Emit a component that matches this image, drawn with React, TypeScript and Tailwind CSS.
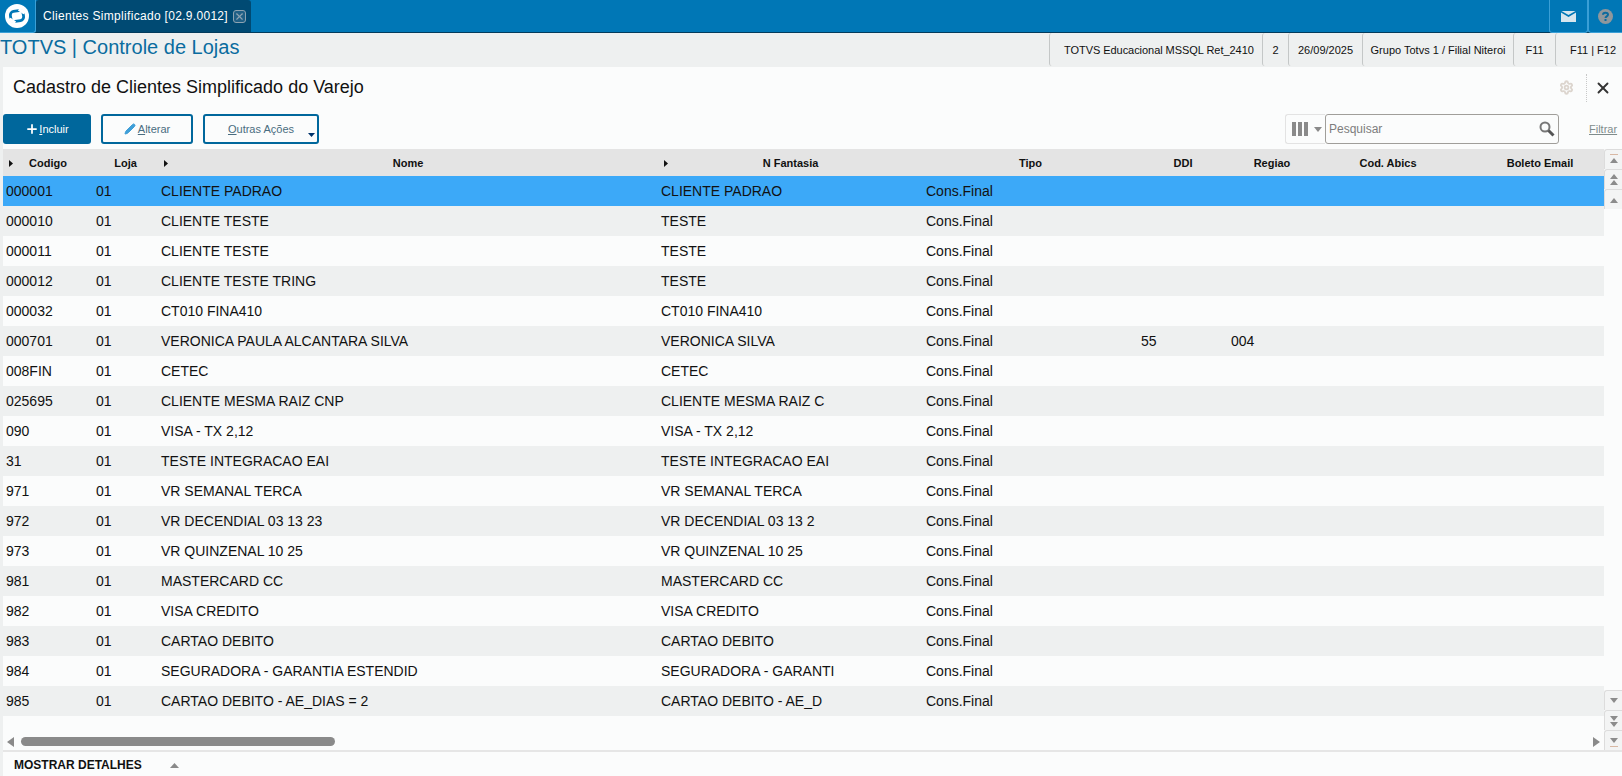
import { Plus, Pencil, X, Settings } from 'lucide-react';

const rows = [
  ['000001', '01', 'CLIENTE PADRAO', 'CLIENTE PADRAO'],
  ['000010', '01', 'CLIENTE TESTE', 'TESTE'],
  ['000011', '01', 'CLIENTE TESTE', 'TESTE'],
  ['000012', '01', 'CLIENTE TESTE TRING', 'TESTE'],
  ['000032', '01', 'CT010 FINA410', 'CT010 FINA410'],
  ['000701', '01', 'VERONICA PAULA ALCANTARA SILVA', 'VERONICA SILVA', '55', '004'],
  ['008FIN', '01', 'CETEC', 'CETEC'],
  ['025695', '01', 'CLIENTE MESMA RAIZ CNP', 'CLIENTE MESMA RAIZ C'],
  ['090', '01', 'VISA - TX 2,12', 'VISA - TX 2,12'],
  ['31', '01', 'TESTE INTEGRACAO EAI', 'TESTE INTEGRACAO EAI'],
  ['971', '01', 'VR SEMANAL TERCA', 'VR SEMANAL TERCA'],
  ['972', '01', 'VR DECENDIAL 03 13 23', 'VR DECENDIAL 03 13 2'],
  ['973', '01', 'VR QUINZENAL 10 25', 'VR QUINZENAL 10 25'],
  ['981', '01', 'MASTERCARD CC', 'MASTERCARD CC'],
  ['982', '01', 'VISA CREDITO', 'VISA CREDITO'],
  ['983', '01', 'CARTAO DEBITO', 'CARTAO DEBITO'],
  ['984', '01', 'SEGURADORA - GARANTIA ESTENDID', 'SEGURADORA - GARANTI'],
  ['985', '01', 'CARTAO DEBITO - AE_DIAS = 2', 'CARTAO DEBITO - AE_D'],
];

const HeadArrow = () => (
  <svg width="4" height="7" viewBox="0 0 4 7" className="absolute left-[6px] top-[9px]">
    <path d="M0 0 L4 3.5 L0 7 Z" fill="#111" />
  </svg>
);

// small grey scroll buttons on the right of the grid
const ScrollBtn = ({ dir, double, bar }: { dir: 'up' | 'down'; double?: boolean; bar?: boolean }) => (
  <div className="w-[18px] h-[20px] shrink-0 bg-[#f3f4f4] border-l border-t border-[#dcdcdc] rounded-tl-[3px] flex items-center justify-center">
    <svg width="10" height="14" viewBox="0 0 10 14">
      {dir === 'up' ? (
        <g fill="#8c8c8c">
          {bar && <rect x="1" y="1" width="8" height="1" fill="#d8b8a4" />}
          <path d={double ? 'M5 1 L9 6 L1 6 Z M5 7 L9 12 L1 12 Z' : 'M5 5 L9 10 L1 10 Z'} />
        </g>
      ) : (
        <g fill="#8c8c8c">
          {bar && <rect x="1" y="12" width="8" height="1" fill="#d8b8a4" />}
          <path d={double ? 'M1 2 L9 2 L5 7 Z M1 8 L9 8 L5 13 Z' : 'M1 4 L9 4 L5 9 Z'} />
        </g>
      )}
    </svg>
  </div>
);

export default function App() {
  return (
    <div className="w-[1622px] h-[776px] flex flex-col overflow-hidden bg-[#eef0f0] text-[#111] font-['Liberation_Sans',Arial,sans-serif]">
      {/* top bar */}
      <div className="h-[33px] shrink-0 flex bg-[#0077b6] border-b border-[#033b5c]">
        <div className="w-[36px] h-[33px] pr-[2px] flex items-center justify-center border-r border-b border-[#3a9fd6] rounded-br-[3px]">
          <svg width="24" height="24" viewBox="0 0 26 26">
            <circle cx="13" cy="13" r="13" fill="#fff" />
            <rect x="6" y="7.5" width="14" height="11" rx="4" fill="#fff" stroke="#0077b6" strokeWidth="3" transform="rotate(-10 13 13)" />
            <path d="M16 4 L23 9 L20 11 L14 7 Z M10 22 L3 17 L6 15 L12 19 Z" fill="#fff" />
          </svg>
        </div>
        <div className="w-[215px] bg-[#004a73] rounded-t-[3px] flex items-center pl-[7px] text-white text-[12px] gap-[5px]">
          <span className="whitespace-nowrap tracking-[0.31px]">Clientes Simplificado [02.9.0012]</span>
          <span className="w-[13px] h-[13px] rounded-[3px] border border-[#8da3b1] bg-[#1f5f85] flex items-center justify-center">
            <X size={11} color="#8da3b1" strokeWidth={2.5} />
          </span>
        </div>
        <div className="ml-auto flex">
          <div className="w-[39px] h-[33px] border-l border-r border-b border-[#3a9fd6] rounded-b-[3px] flex items-center justify-center">
            <svg width="15" height="11" viewBox="0 0 15 11">
              <path d="M0 1.5 L7.5 6 L15 1.5 L15 11 L0 11 Z" fill="#d8e6ee" />
              <path d="M0.5 0 L14.5 0 L7.5 4 Z" fill="#d8e6ee" />
            </svg>
          </div>
          <div className="w-[34px] h-[33px] border-l border-b border-[#3a9fd6] rounded-bl-[3px] flex items-center justify-center">
            <svg width="15" height="15" viewBox="0 0 15 15">
              <circle cx="7.5" cy="7.5" r="7.5" fill="#8f979c" />
              <path d="M5 5.8 C5 3 10 3 10 5.6 C10 7.4 7.5 7.4 7.5 9" stroke="#0b6a9e" strokeWidth="2" fill="none" />
              <rect x="6.5" y="10" width="2" height="2" fill="#0b6a9e" />
            </svg>
          </div>
        </div>
      </div>

      {/* module title and session info */}
      <div className="h-[34px] shrink-0 flex justify-between">
        <div className="text-[20px] leading-[28px] text-[#0a6c9f]">TOTVS | Controle de Lojas</div>
        <div className="flex text-[11px] h-[33px] whitespace-nowrap">
          <div className="w-[213px] pl-[14px] pt-[2px] flex items-center border-l border-[#c4c7c7] rounded-l-[3px] tracking-[-0.05px]">TOTVS Educacional MSSQL Ret_2410</div>
          <div className="w-[26px] pt-[2px] flex items-center justify-center border-l border-[#c4c7c7] rounded-l-[3px]">2</div>
          <div className="w-[74px] pt-[2px] flex items-center justify-center border-l border-[#c4c7c7] rounded-l-[3px]">26/09/2025</div>
          <div className="w-[151px] pt-[2px] flex items-center justify-center border-l border-[#c4c7c7] rounded-l-[3px]">Grupo Totvs 1 / Filial Niteroi</div>
          <div className="w-[42px] pt-[2px] flex items-center justify-center border-l border-[#c4c7c7] rounded-l-[3px]">F11</div>
          <div className="w-[67px] pl-[14px] pt-[2px] flex items-center border-l border-[#c4c7c7] rounded-l-[3px]">F11 | F12</div>
        </div>
      </div>

      {/* window */}
      <div className="flex-1 ml-[3px] bg-[#fbfcfc] flex flex-col min-h-0">
        <div className="h-[37px] shrink-0 flex items-center pl-[10px] pr-[10px] pt-[4px]">
          <h1 className="text-[18px] text-[#111]">Cadastro de Clientes Simplificado do Varejo</h1>
          <Settings size={15} className="ml-auto mr-[12px]" color="#dcd5ce" strokeWidth={3} />
          <div className="h-[28px] border-l border-dotted border-[#c8c8c8] mr-[7px]" />
          <X size={18} color="#333" strokeWidth={2.5} />
        </div>

        {/* toolbar */}
        <div className="h-[45px] shrink-0 flex items-start pt-[10px]">
          <button className="w-[88px] h-[30px] rounded-[3px] bg-[#00679c] text-white text-[11px] flex items-center justify-center">
            <Plus size={14} strokeWidth={3} />
            <span><u>I</u>ncluir</span>
          </button>
          <button className="w-[92px] h-[30px] ml-[10px] rounded-[3px] border-2 border-[#00679c] text-[11px] flex items-center justify-center gap-[2px]">
            <Pencil size={12} fill="#3f9fd8" color="#3f9fd8" />
            <span className="text-[#4a6d80]"><u>A</u>lterar</span>
          </button>
          <button className="relative w-[116px] h-[30px] ml-[10px] rounded-[3px] border-2 border-[#00679c] text-[#4a6d80] text-[11px] flex items-center justify-center">
            <span><u>O</u>utras Ações</span>
            <svg width="7" height="4" viewBox="0 0 7 4" className="absolute right-[2px] bottom-[5px]">
              <path d="M0 0 L7 0 L3.5 4 Z" fill="#00336b" />
            </svg>
          </button>

          <div className="ml-auto flex h-[30px] items-center">
            <div className="w-[40px] h-[30px] border border-r-0 border-[#e3e3e3] rounded-l-[3px] flex items-center pl-[6px] gap-[6px]">
              <span className="flex gap-[2px]">
                <span className="w-[4px] h-[14px] bg-[#8a8a8a]" />
                <span className="w-[4px] h-[14px] bg-[#8a8a8a]" />
                <span className="w-[4px] h-[14px] bg-[#8a8a8a]" />
              </span>
              <svg width="8" height="5" viewBox="0 0 8 5"><path d="M0 0 L8 0 L4 5 Z" fill="#8a8a8a" /></svg>
            </div>
            <div className="w-[234px] h-[30px] border border-[#a09e9a] rounded-[3px] flex items-center pl-[3px] pr-[3px] text-[12px] text-[#7d7d7d]">
              Pesquisar
              <svg width="16" height="16" viewBox="0 0 16 16" className="ml-auto">
                <circle cx="6" cy="6" r="4.5" fill="none" stroke="#777" strokeWidth="2" />
                <path d="M9.5 9.5 L14.5 14.5" stroke="#555" strokeWidth="3" />
              </svg>
            </div>
            <span className="w-[28px] ml-[30px] mr-[5px] text-[11px] text-[#7f8c8c] underline">Filtrar</span>
          </div>
        </div>

        {/* grid */}
        <div className="flex-1 min-h-0 flex">
          <div className="w-[1601px] flex flex-col">
            <div className="flex h-[27px] shrink-0 pt-[2px] bg-[#e4e4e4] text-[11px] font-bold items-center text-center">
              <div className="relative w-[90px] self-stretch flex items-center justify-center"><HeadArrow />Codigo</div>
              <div className="w-[65px]">Loja</div>
              <div className="relative w-[500px] self-stretch flex items-center justify-center"><HeadArrow />Nome</div>
              <div className="relative w-[265px] self-stretch flex items-center justify-center"><HeadArrow />N Fantasia</div>
              <div className="w-[215px]">Tipo</div>
              <div className="w-[90px]">DDI</div>
              <div className="w-[88px]">Regiao</div>
              <div className="w-[144px]">Cod. Abics</div>
              <div className="w-[144px] pl-[16px]">Boleto Email</div>
            </div>
            {rows.map((r, i) => (
              <div
                key={r[0]}
                className={`h-[30px] shrink-0 flex items-center text-[14px] whitespace-nowrap ${i === 0 ? 'bg-[#3ca9f8]' : i % 2 === 1 ? 'bg-[#eef0f0]' : 'bg-[#fbfcfc]'}`}
              >
                <div className="w-[90px] pl-[3px]">{r[0]}</div>
                <div className="w-[65px] pl-[3px]">{r[1]}</div>
                <div className="w-[500px] pl-[3px]">{r[2]}</div>
                <div className="w-[265px] pl-[3px]">{r[3]}</div>
                <div className="w-[215px] pl-[3px]">Cons.Final</div>
                <div className="w-[90px] pl-[3px]">{r[4]}</div>
                <div className="w-[88px] pl-[3px]">{r[5]}</div>
              </div>
            ))}
            {/* horizontal scrollbar */}
            <div className="flex-1 flex items-center pl-[3px] pb-[3px] pt-[20px]">
              <svg width="8" height="10" viewBox="0 0 8 10"><path d="M8 0 L8 10 L1 5 Z" fill="#8a8a8a" /></svg>
              <div className="w-[314px] h-[9px] ml-[7px] rounded-full bg-[#8a8a8a]" />
              <svg width="8" height="10" viewBox="0 0 8 10" className="ml-auto mr-[3px]"><path d="M0 0 L0 10 L7 5 Z" fill="#8a8a8a" /></svg>
            </div>
          </div>
          <div className="w-[18px] flex flex-col">
            <ScrollBtn dir="up" bar />
            <ScrollBtn dir="up" double />
            <ScrollBtn dir="up" />
            <div className="flex-1" />
            <ScrollBtn dir="down" />
            <ScrollBtn dir="down" double />
            <ScrollBtn dir="down" bar />
          </div>
        </div>

        {/* details footer */}
        <div className="h-[26px] shrink-0 border-t-2 border-[#e6e6e6] flex items-center pl-[11px] pt-[2px] text-[12px] font-bold text-[#111]">
          MOSTRAR DETALHES
          <svg width="9" height="5" viewBox="0 0 9 5" className="ml-[28px]"><path d="M4.5 0 L9 5 L0 5 Z" fill="#8a8a8a" /></svg>
        </div>
      </div>
    </div>
  );
}
